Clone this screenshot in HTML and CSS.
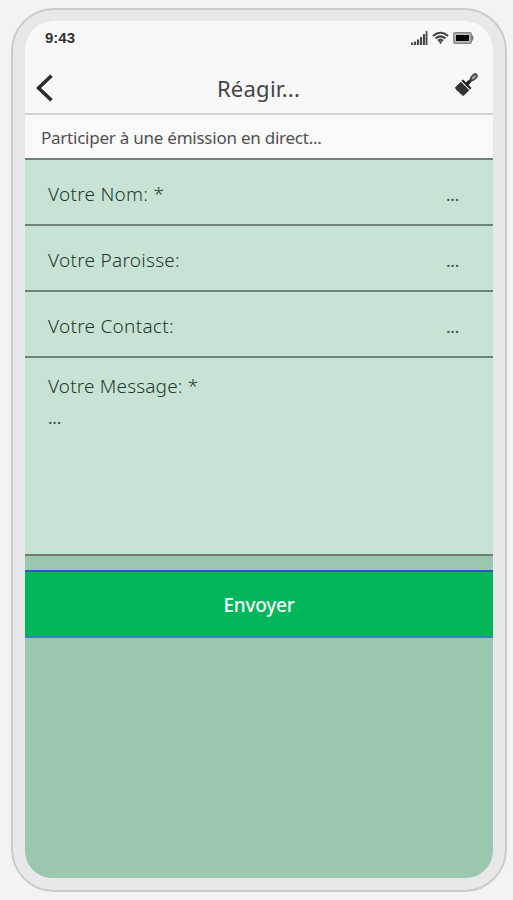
FILE: index.html
```html
<!DOCTYPE html>
<html lang="fr">
<head>
<meta charset="utf-8">
<title>Réagir</title>
<link rel="stylesheet" href="styles.css">
</head>
<body>
<div class="phone">
  <main class="screen">
    <div class="status">
      <span class="time">9:43</span>
      <span class="indicators">
        <svg width="17" height="14" viewBox="0 0 17 14" fill="#4a4a4a"><path d="M0 11.500h2.200V14H0zM3 10.500h2.200V14H3zM6 8.500h2.200V14H6zM9 6h2.200v8H9zM12 3h2.200v11H12zM14.800 0h1.700v14h-1.700z"/></svg>
        <svg width="17" height="14" viewBox="0 0 18 14" fill="none" stroke="#444" stroke-width="2.200"><path d="M1 4.800Q9-2 17 4.800M3.800 7.500Q9 3 14.200 7.500M6.300 10Q9 7.500 11.700 10"/><path d="M7 10.500h4L9 13.500z" fill="#444" stroke="none"/></svg>
        <svg width="21" height="12" viewBox="0 0 21 12"><rect x=".8" y=".8" width="17.400" height="10.400" rx="1.500" fill="#bbb" stroke="#888" stroke-width="1.500"/><rect x="3" y="3" width="13" height="6" fill="#050505"/><path d="M18.500 2.500q2 .5 2 3.500t-2 3.500z" fill="#777"/></svg>
      </span>
    </div>
    <header class="nav">
      <svg class="back" width="18" height="28" viewBox="0 0 18 28" fill="none" stroke="#2c2c2c" stroke-width="3.600"><path d="M15.500 1.800 2.500 14l13 12.200"/></svg>
      <h1>Réagir...</h1>
      <svg class="brush" width="24" height="24" viewBox="0 0 24 24"><g transform="translate(11.500 12.500) rotate(45)"><path d="M-6 2h12v8q-1.500 1.800-3 .5-1.500 1.200-3 0-1.500 1.200-6 0z" fill="#333"/><path d="M-6-1.200h4.200V-4.500h3.600v3.300H6V1H-6z" fill="#222"/><path d="M-1.500-4.500V-9h3v4.500z" fill="#333"/><rect x="-2" y="-14" width="4" height="7" rx="2" fill="#999" stroke="#444" stroke-width="1.500"/></g></svg>
    </header>
    <p class="intro">Participer à une émission en direct...</p>
    <form class="form">
      <div class="row"><span class="label">Votre Nom: *</span><span class="dots">...</span></div>
      <div class="row"><span class="label">Votre Paroisse:</span><span class="dots">...</span></div>
      <div class="row"><span class="label">Votre Contact:</span><span class="dots">...</span></div>
      <div class="row message"><span class="label long">Votre Message: *</span><span class="dots">...</span></div>
      <button class="send" type="button">Envoyer</button>
    </form>
  </main>
</div>
</body>
</html>
```
FILE: styles.css
```css
* { box-sizing: border-box; }
body { margin: 0; background: #f3f3f3; color: #444; font-family: "Noto Sans", "Open Sans", sans-serif; }
.phone { width: 496px; height: 884px; margin: 8px 0 0 11px; padding: 11px 11px 11px 12px; border: 2px solid #cbcbcc; border-radius: 43px; background: #e8e8ea; }
.screen { width: 468px; height: 857px; overflow: hidden; border-radius: 27px; background: #9bc7af; }
.status { height: 34px; padding: 0 19px 0 20px; display: flex; align-items: center; justify-content: space-between; background: #f8f8f8; }
.time { font: bold 15px/34px "Liberation Sans", sans-serif; color: #333; }
.indicators { display: flex; align-items: center; gap: 4px; }
.nav { height: 60px; padding: 0 14px 0 11px; display: flex; align-items: center; justify-content: space-between; background: #f8f8f8; border-bottom: 2px solid #d3d3d3; }
.back { margin-top: 8px; }
.nav h1 { margin: 8px 0 0 8px; font-size: 22px; line-height: 30px; font-weight: 400; letter-spacing: .25px; color: #444; }
.brush { margin-top: -1px; }
.intro { height: 43px; margin: 0; padding: 0 16px; line-height: 45px; font-size: 17px; letter-spacing: -.24px; color: #505050; background: #f9f9f9; }
.row { height: 66px; padding: 6px 34px 0 23px; display: flex; justify-content: space-between; align-items: center; background: #c7e3d3; border-top: 2px solid #6f8278; }
.label { font-size: 19px; font-weight: 300; line-height: 26px; letter-spacing: .27px; color: #26382e; }
.long { letter-spacing: .15px; }
.dots { font-size: 17px; line-height: 28px; letter-spacing: -.2px; color: #365143; }
.message { height: 199px; padding: 15px 23px; flex-direction: column; justify-content: flex-start; align-items: flex-start; border-bottom: 2px solid #6f7d73; }
.message .dots { margin-top: 5px; }
.row:not(.message) .label { margin-top: -2px; }
.send { display: block; width: 100%; height: 69px; margin-top: 14px; padding: 2px 0 0; border: 0 solid #2f57c0; border-width: 2px 0; border-bottom-color: #3a83bd; background: #04b65b; color: #f2fff7; font: 500 19px/28px "Noto Sans", sans-serif; letter-spacing: -.25px; }
.message { height: 200px; }
.send { height: 68px; }
```
